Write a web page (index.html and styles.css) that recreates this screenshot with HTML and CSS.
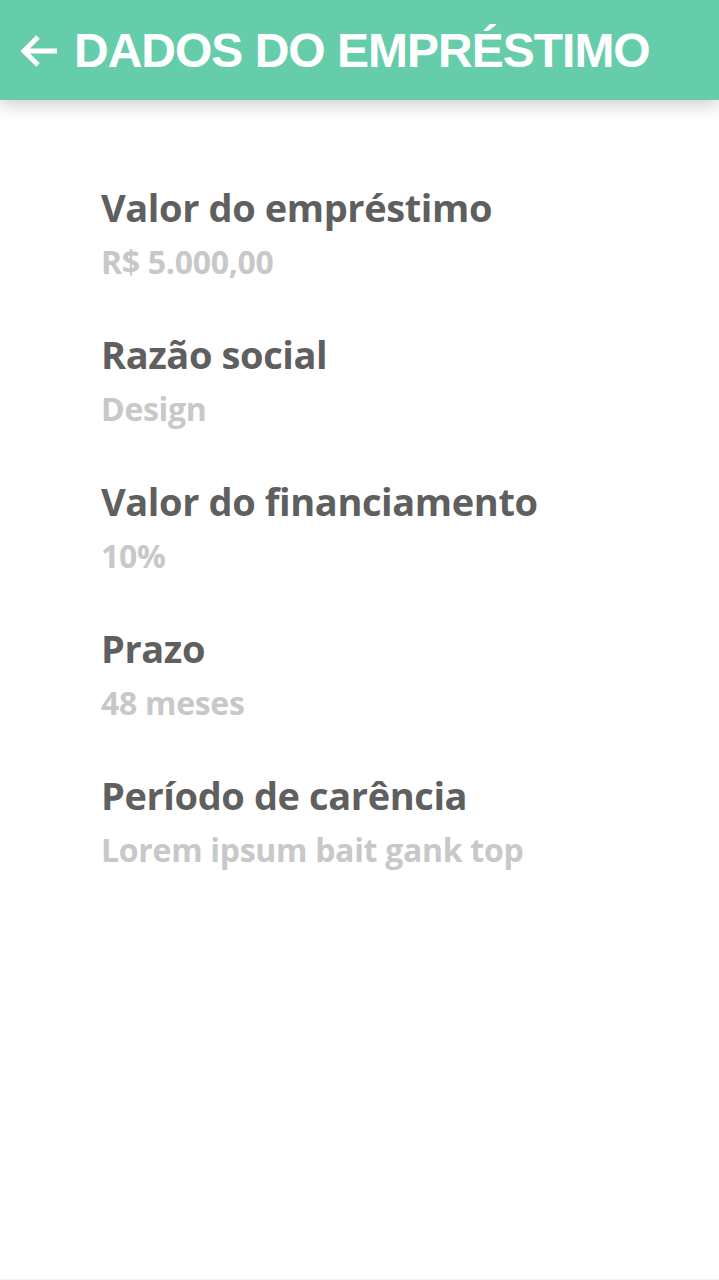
FILE: index.html
```html
<!DOCTYPE html>
<html lang="pt">
<head>
<meta charset="utf-8">
<title>Dados do empréstimo</title>
<link rel="stylesheet" href="styles.css">
</head>
<body>
<div class="screen">
  <header class="topbar">
    <svg class="back" viewBox="0 0 38 34" width="38" height="34" aria-hidden="true">
      <path d="M18 3 L4 17 L18 31 M4 17 H37" fill="none" stroke="#fff" stroke-width="5" stroke-linejoin="miter"/>
    </svg>
    <h1 class="title">DADOS DO EMPRÉSTIMO</h1>
  </header>
  <main class="details">
    <div class="item">
      <div class="label">Valor do empréstimo</div>
      <div class="value">R$ 5.000,00</div>
    </div>
    <div class="item">
      <div class="label">Razão social</div>
      <div class="value">Design</div>
    </div>
    <div class="item">
      <div class="label">Valor do financiamento</div>
      <div class="value">10%</div>
    </div>
    <div class="item">
      <div class="label">Prazo</div>
      <div class="value">48 meses</div>
    </div>
    <div class="item">
      <div class="label">Período de carência</div>
      <div class="value">Lorem ipsum bait gank top</div>
    </div>
  </main>
</div>
</body>
</html>
```
FILE: styles.css
```css
html, body {
  margin: 0;
  padding: 0;
  background: #fff;
}
.screen {
  width: 719px;
  height: 1280px;
  display: flex;
  flex-direction: column;
  background: #fff;
  border-bottom: 1px solid #f3f3f3;
  box-sizing: border-box;
  overflow: hidden;
}
.topbar {
  height: 100px;
  flex: 0 0 100px;
  background: #66cdaa;
  display: flex;
  align-items: center;
  gap: 16px;
  padding-left: 20px;
  box-shadow: 0 6px 16px rgba(0,0,0,0.18);
  position: relative;
  z-index: 1;
}
.back {
  flex: none;
  margin-top: 2px;
}
.title {
  margin: 0;
  color: #fff;
  font-family: "Liberation Sans", Arial, sans-serif;
  font-weight: 700;
  font-size: 48px;
  letter-spacing: -1px;
  line-height: 1;
  margin-top: 2px;
}
.details {
  padding: 84px 0 0 101px;
  display: flex;
  flex-direction: column;
  gap: 49px;
  font-family: "Open Sans", "Noto Sans", sans-serif;
  font-weight: 700;
}
.item {
  display: flex;
  flex-direction: column;
  gap: 12px;
}
.label {
  color: #5f5f5f;
  font-size: 38px;
  line-height: 46px;
  letter-spacing: -0.4px;
}
.value {
  color: #c8c8c8;
  font-size: 32px;
  line-height: 40px;
  letter-spacing: -0.3px;
}
```
